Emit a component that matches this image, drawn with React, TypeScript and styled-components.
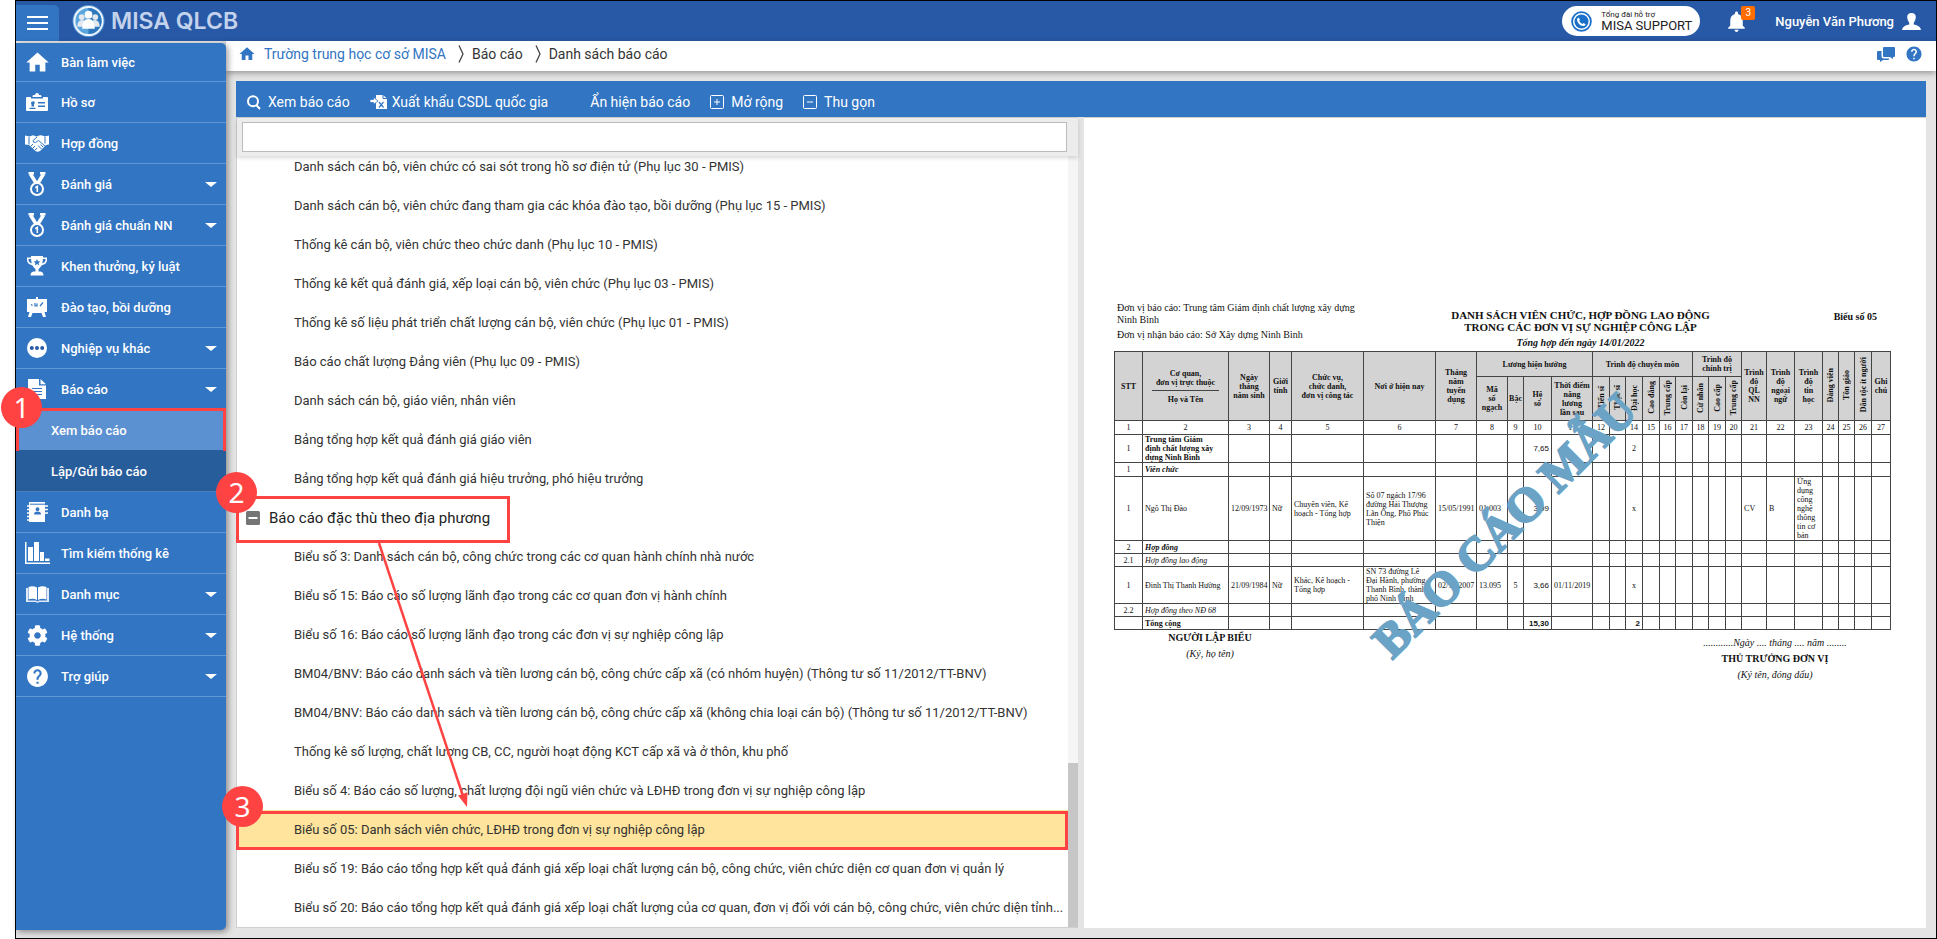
import React from "react";
import styled, { createGlobalStyle, css } from "styled-components";
import { FaCog } from "react-icons/fa";
import { MdHome, MdHelp, MdNotifications } from "react-icons/md";

const colors = {
  header: "#2859a6",
  brand: "#3175c3",
  line: "#5f96d3",
  subActive: "#5c91d1",
  sub: "#285d9c",
  page: "#e4e4e4",
  border: "#cfcfcf",
  mark: "#ff4343",
  highlight: "#fee49c",
  watermark: "#6ba3c6",
  text: "#333",
};

const GlobalStyle = createGlobalStyle`
  *, *::before, *::after { box-sizing: border-box; }
  body {
    margin: 0;
    background: #fff;
    color: ${colors.text};
    font-family: Roboto, "Noto Sans", sans-serif;
    font-size: 13px;
  }
  button, input { font: inherit; }
  a { color: inherit; text-decoration: none; }
  ul, p, h1, h2 { margin: 0; padding: 0; }
  ul { list-style: none; }
  svg { display: block; flex: none; }
`;

/* ---------- shell ---------- */

const Frame = styled.div`
  margin-left: 15px;
  height: 100vh;
  min-height: 600px;
  border: 1px solid #000;
  display: flex;
  flex-direction: column;
  background: ${colors.page};
`;

const Header = styled.header`
  flex: none;
  display: flex;
  align-items: center;
  height: 40px;
  padding-right: 15px;
  background: ${colors.header};
  color: #fff;
`;

const Hamburger = styled.button`
  align-self: flex-end;
  width: 43px;
  height: 36px;
  padding: 0 11px;
  border: 0;
  border-radius: 0 5px 0 0;
  background: ${colors.brand};
  display: flex;
  flex-direction: column;
  justify-content: center;
  gap: 4px;

  span {
    height: 2px;
    background: #fff;
  }
`;

const Logo = styled.a`
  display: flex;
  align-items: center;
  gap: 6px;
  margin-left: 13px;
  font-family: Inter, sans-serif;
  font-size: 23px;
  font-weight: 600;
  color: #c3d3ec;
`;

const HeaderTools = styled.div`
  margin-left: auto;
  display: flex;
  align-items: center;
`;

const Support = styled.button`
  display: flex;
  align-items: center;
  gap: 9px;
  width: 138px;
  height: 30px;
  padding: 0 9px;
  border: 0;
  border-radius: 15px;
  background: #fff;
  color: #222;
  text-align: left;
`;

const SupportText = styled.span`
  display: flex;
  flex-direction: column;
  font-size: 13px;
  line-height: 14px;
  white-space: nowrap;

  small {
    font-size: 8px;
    line-height: 9px;
  }
`;

const Bell = styled.button`
  position: relative;
  margin-left: 24px;
  padding: 0;
  border: 0;
  background: none;
  color: #fff;
`;

const Badge = styled.span`
  position: absolute;
  top: -3px;
  right: -6px;
  width: 14px;
  height: 14px;
  border-radius: 2px;
  background: #ff6d00;
  font-size: 10px;
  line-height: 14px;
`;

const User = styled.button`
  display: flex;
  align-items: center;
  gap: 8px;
  margin-left: 26px;
  padding: 0;
  border: 0;
  background: none;
  color: #fff;
  font-size: 13px;
  font-weight: 500;
`;

const Body = styled.div`
  flex: 1;
  min-height: 0;
  display: flex;
`;

/* ---------- sidebar ---------- */

const Sidebar = styled.nav`
  position: relative;
  z-index: 2;
  flex: none;
  width: 210px;
  margin: 2px 0 8px;
  border-radius: 0 5px 5px 0;
  background: ${colors.brand};
  box-shadow: 2px 2px 6px rgba(0, 0, 0, 0.4);
  color: #fff;
  font-weight: 500;
`;

const SideRow = styled.a`
  display: flex;
  align-items: center;
  height: 41px;
  padding: 0 9px;
  border-bottom: 1px solid ${colors.line};

  &:first-child {
    height: 39px;
  }
`;

const SideIcon = styled.span`
  width: 24px;
  margin-right: 12px;
  display: flex;
  justify-content: center;
`;

const Caret = styled.i`
  margin-left: auto;
  border: 6px solid transparent;
  border-top: 5px solid #fff;
  border-bottom: 0;
`;

const SubRow = styled.a<{ $active?: boolean }>`
  position: relative;
  display: flex;
  align-items: center;
  height: 41px;
  padding-left: 35px;
  border-bottom: 1px solid ${(p) => (p.$active ? colors.sub : "#4d80ba")};
  background: ${(p) => (p.$active ? colors.subActive : colors.sub)};
`;

/* ---------- content ---------- */

const Content = styled.div`
  flex: 1;
  min-width: 0;
  display: flex;
  flex-direction: column;
`;

const Breadcrumb = styled.div`
  flex: none;
  display: flex;
  align-items: center;
  height: 30px;
  margin-bottom: 10px;
  padding: 0 13px 4px 12px;
  background: #fff;
  box-shadow: 0 2px 6px rgba(0, 0, 0, 0.35);
  font-size: 14px;
`;

const CrumbHome = styled.a`
  display: flex;
  align-items: center;
  gap: 8px;
  color: ${colors.brand};
`;

const CrumbSep = styled.svg`
  margin: 0 8px 0 12px;
`;

const CrumbTools = styled.div`
  margin-left: auto;
  display: flex;
  align-items: center;
  gap: 10px;
  color: ${colors.brand};
`;

const Toolbar = styled.div`
  flex: none;
  display: flex;
  align-items: center;
  gap: 20px;
  height: 36px;
  margin: 0 10px;
  padding: 6px 11px 0;
  background: ${colors.brand};
`;

const ToolButton = styled.button<{ $gap?: number; $indent?: number }>`
  display: flex;
  align-items: center;
  gap: ${(p) => p.$gap ?? 7}px;
  padding: 0 0 0 ${(p) => p.$indent ?? 0}px;
  border: 0;
  background: none;
  color: #fff;
  font-size: 14px;
  white-space: nowrap;
`;

const Panes = styled.div`
  flex: 1;
  min-height: 0;
  display: grid;
  grid-template-columns: minmax(0, 1fr) minmax(0, 1fr);
  grid-template-rows: minmax(0, 1fr);
  gap: 6px;
  margin: 0 10px 10px;
`;

const TreePane = styled.section`
  position: relative;
  display: flex;
  flex-direction: column;
  border: solid ${colors.border};
  border-width: 1px 0 1px 1px;
  background: #fff;
`;

const SearchBar = styled.div`
  position: relative;
  z-index: 1;
  flex: none;
  padding: 4px 11px 4px 5px;
  background: #ececec;
  box-shadow: 0 2px 4px rgba(0, 0, 0, 0.15);

  input {
    display: block;
    width: 100%;
    height: 30px;
    padding: 0 8px;
    border: 1px solid #bbb;
    background: #fff;
  }
`;

const TreeScroll = styled.div`
  flex: 1;
  min-height: 0;
  display: flex;
`;

/* The list is scrolled to its end, so rows are stacked against the bottom. */
const TreeList = styled.ul`
  flex: 1;
  min-width: 0;
  display: flex;
  flex-direction: column;
  justify-content: flex-end;
  overflow: hidden;
`;

const rowBase = css`
  display: flex;
  align-items: center;
  width: 100%;
  height: 39px;
  border: 0;
  background: none;
  text-align: left;
  white-space: nowrap;
`;

const TreeRow = styled.button<{ $selected?: boolean }>`
  ${rowBase}
  padding: 0 4px 0 57px;
  color: ${colors.text};
  ${(p) => p.$selected && `background: ${colors.highlight};`}

  span {
    overflow: hidden;
    text-overflow: ellipsis;
  }
`;

const TreeGroup = styled.button`
  ${rowBase}
  gap: 9px;
  padding: 0 9px;
  color: #222;
  font-size: 15px;
`;

const ScrollTrack = styled.div`
  flex: none;
  width: 10px;
  display: flex;
  flex-direction: column;
  justify-content: flex-end;
  background: #f5f5f5;

  i {
    height: 164px;
    background: #c6c6c6;
  }
`;

/* ---------- step markers drawn over the page ---------- */

const StepBox = styled.div`
  position: absolute;
  border: 3px solid ${colors.mark};
  pointer-events: none;
`;

const Step = styled.b`
  position: absolute;
  z-index: 3;
  width: 41px;
  height: 41px;
  border-radius: 50%;
  background: ${colors.mark};
  color: #fff;
  font-family: "Noto Sans", sans-serif;
  font-size: 28px;
  font-weight: 400;
  line-height: 40px;
  text-align: center;
`;

const MenuBox = styled(StepBox)`
  inset: -2px 0 -4px;
`;
const MenuStep = styled(Step)`
  left: -15px;
  top: -23px;
`;

const Markers = styled.div`
  position: absolute;
  inset: auto 0 0 -1px;
  z-index: 3;
  height: 455px;
  pointer-events: none;
`;
const GroupBox = styled(StepBox)`
  left: 0;
  top: 24px;
  width: 274px;
  height: 47px;
`;
const GroupStep = styled(Step)`
  left: -20px;
  top: 0;
`;
const ItemBox = styled(StepBox)`
  left: 0;
  right: 10px;
  bottom: 77px;
  height: 39px;
`;
const ItemStep = styled(Step)`
  left: -14px;
  bottom: 100px;
`;
const Arrow = styled.svg`
  position: absolute;
  left: 140px;
  top: 71px;
`;

/* ---------- report preview ---------- */

const Preview = styled.section`
  padding: 184px 35px 0 30px;
  border-top: 1px solid ${colors.border};
  background: #fff;
  overflow: hidden;
  color: #111;
  font-family: "Liberation Serif", serif;
`;

const Sheet = styled.article`
  position: relative;
  width: 777px;
  margin: 0 auto;
`;

const SheetHead = styled.header`
  display: flex;
  height: 49px;
`;

const Org = styled.div`
  width: 252px;
  padding-left: 3px;
  font-size: 10px;
  line-height: 12px;

  p + p { margin-top: 3px; }
`;

const SheetTitle = styled.div`
  width: 429px;
  padding-top: 7px;
  text-align: center;

  h1 { font-size: 11px; line-height: 12px; }
  p {
    margin-top: 4px;
    font-size: 10px;
    line-height: 12px;
    font-style: italic;
    font-weight: 700;
  }
`;

const FormNo = styled.div`
  flex: 1;
  padding: 9px 14px 0 0;
  font-size: 10px;
  line-height: 12px;
  font-weight: 700;
  text-align: right;
`;

const Grid = styled.table`
  width: 777px;
  table-layout: fixed;
  border-collapse: collapse;
  font-size: 8px;
  line-height: 9px;

  th, td {
    padding: 0 2px;
    border: 1px solid #444;
    vertical-align: middle;
  }
  th {
    padding: 0;
    background: #d3d3d3;
    font-weight: 700;
  }
`;

const Tr = styled.tr<{ $h: number }>`
  height: ${(p) => p.$h}px;
`;

const Td = styled.td<{ $align?: string; $bold?: boolean; $italic?: boolean; $sans?: boolean }>`
  text-align: ${(p) => p.$align ?? "left"};
  font-weight: ${(p) => (p.$bold ? 700 : 400)};
  font-style: ${(p) => (p.$italic ? "italic" : "normal")};
  white-space: pre-line;
  ${(p) => p.$sans && `font-family: "Liberation Sans", sans-serif;`}
`;

const Vertical = styled.span`
  display: inline-block;
  writing-mode: vertical-rl;
  transform: rotate(180deg);
  white-space: nowrap;
`;

const NameRule = styled.span`
  display: block;
  margin: 3px 9px 4px;
  border-top: 1px solid #444;
`;

const Signatures = styled.div`
  display: flex;
  justify-content: space-between;
  font-size: 10px;
  text-align: center;
`;

const Sign = styled.div<{ $side: "left" | "right" }>`
  width: ${(p) => (p.$side === "left" ? 192 : 232)}px;
  padding-top: ${(p) => (p.$side === "left" ? 0 : 5)}px;
  line-height: 16px;
  p { font-style: italic; }
`;

const Watermark = styled.div`
  position: absolute;
  left: 284px;
  top: 316px;
  transform: rotate(-45deg);
  transform-origin: 0 100%;
  color: ${colors.watermark};
  -webkit-text-stroke: 2px ${colors.watermark};
  font-size: 48px;
  line-height: 48px;
  font-weight: 700;
  white-space: nowrap;
`;

/* ---------- icons ---------- */

const IdIcon = () => (
  <svg width="22" height="18" viewBox="0 0 22 18" fill="#fff">
    <path fillRule="evenodd" d="M9 2q0-2 2-2t2 2h1.500q1 0 1 1.500V4h-9v-.500Q6.500 2 7.500 2zM1 4h4v1.500h12V4h4q1 0 1 1v12q0 1-1 1H1q-1 0-1-1V5q0-1 1-1zM6.500 8.500a1.500 1.500 0 0 0-1 2.600v2.400H8v-2.400a1.500 1.500 0 0 0-1.500-2.600zM3.500 16h6v-1.300h-6zM12 9h7v1.500h-7zM12 12.500h7V14h-7z" />
  </svg>
);
const HandshakeIcon = () => (
  <svg width="24" height="17" viewBox="0 0 24 17">
    <path
      d="M0 .5L4.500 1.500 8 0.300 11.500 1.500 15 .2Q17 0 19.500 1.500L24 .5V9.500L21 10 15 16Q12.500 17.500 10.500 16L4 10 0 9.500z"
      fill="#fff"
    />
    <path
      d="M4 2v7.500M20 2v6.500M12 2L8 5.500Q8 8 10.500 7.500L13.500 5.500 20 11M5.500 11.500L8 9M7.500 13.500L10 11M10 15.200L12 13M13 10.500L16.500 14M15.500 9.500L18 12"
      fill="none"
      stroke={colors.brand}
      strokeWidth="1"
    />
  </svg>
);
const MedalIcon = () => (
  <svg width="18" height="24" viewBox="0 0 18 24" fill="none" stroke="#fff">
    <path d="M2.500 2L8 11M15.500 2L10 11" strokeWidth="3.500" />
    <path d="M.5 1.200h5.500M12 1.200h5.500" strokeWidth="2.400" />
    <circle cx="9" cy="17" r="6" strokeWidth="2" fill={colors.brand} />
    <path d="M7.300 15.700L9.300 14.500V20" strokeWidth="1.600" />
  </svg>
);
const TrophyIcon = () => (
  <svg width="20" height="20" viewBox="0 0 20 20" fill="#fff">
    <path
      fillRule="evenodd"
      d="M4 0h12v1.500h4v2.500q0 4-5.500 5.500Q13 12 11.500 13v2.500h2q3 .5 3 4h-13q0-3.500 3-4h2V13Q7 12 5.500 9.500 0 8 0 4V1.500h4zM1.500 3v1.200Q1.800 6.500 4.700 7.500 4.200 5.500 4.100 3zM18.500 3h-2.600q-.1 2.500-.6 4.500 2.900-1 3.200-3.300z"
    />
    <path d="M10 3l1 2.200 2.400.2-1.800 1.600.5 2.400L10 8.100 7.900 9.400l.5-2.400-1.800-1.600L9 5.200z" fill={colors.brand} />
  </svg>
);
const BoardIcon = () => (
  <svg width="20" height="20" viewBox="0 0 20 20" fill="#fff">
    <path d="M9 0h2v2h9v13h-2.500l1.500 5h-3l-1.500-4H12v0H8v0H5.500L4 20H1l1.500-5H0V2h9z" />
    <path d="M4 7.500l1.500 1M8 6v3h2V6.500M13 9l3-3.500" stroke={colors.brand} strokeWidth="1.200" fill="none" />
  </svg>
);
const MoreIcon = () => (
  <svg width="20" height="20" viewBox="0 0 20 20">
    <circle cx="10" cy="10" r="10" fill="#fff" />
    <g fill={colors.header}>
      <circle cx="4.800" cy="10" r="2" />
      <circle cx="10" cy="10" r="2" />
      <circle cx="15.200" cy="10" r="2" />
    </g>
  </svg>
);
const FileIcon = () => (
  <svg width="18" height="20" viewBox="0 0 18 20" fill="#fff">
    <path d="M0 0h11v6.500h7V20H0zM12.500 0L18 5.200h-5.500z" />
    <path d="M4 9.500h10M4 12.500h10M4 15.500h10" stroke={colors.brand} strokeWidth="1.200" />
  </svg>
);
const ContactsIcon = () => (
  <svg width="21" height="20" viewBox="0 0 21 20" fill="#fff">
    <path d="M2 0h16v20H2z" />
    <path d="M0 4h4M0 7.500h4M0 11h4M0 14.500h4M0 18h4M18 4h3M18 7.500h3M18 11h3" stroke="#fff" strokeWidth="1.600" />
    <path d="M3 2.200h15" stroke={colors.brand} strokeWidth="1" />
    <circle cx="10.500" cy="7.200" r="1.900" fill={colors.brand} />
    <path d="M7 12.500q0-3 3.500-3t3.500 3z" fill={colors.brand} />
  </svg>
);
const ChartIcon = () => (
  <svg width="25" height="22" viewBox="0 0 25 22" fill="#fff">
    <path d="M0 0h1.500v20.500H25V22H0zM3 5h5v14H3zM9 0h5v19H9zM15 10h4v9h-4zM20 16.500h4.500V19H20z" />
  </svg>
);
const BookIcon = () => (
  <svg width="23" height="17" viewBox="0 0 23 17">
    <path d="M0 2h2v12.500h8l1.500 1 1.500-1h8V2h2v14H13.500q-2 1.500-4 0H0z" fill="#fff" opacity=".85" />
    <path d="M2.500 1Q7-.8 11 1.500V14Q7 12 2.500 13.500zM20.500 1Q16-.8 12 1.500V14q4-2 8.500-.5z" fill="#fff" />
  </svg>
);
const LogoIcon = () => (
  <svg width="33" height="34" viewBox="0 0 34 34">
    <circle cx="17" cy="17" r="16.500" fill="#5b9bd8" />
    <circle cx="17" cy="17" r="14.500" fill="#5ba6de" stroke="#eef5fc" strokeWidth="2" />
    <path d="M17 3.500a13.500 13.500 0 0 1 0 27z" fill="#2f78bd" />
    <g fill="#e3e8ee">
      <circle cx="10" cy="13" r="3" />
      <circle cx="24" cy="13" r="3" />
      <path d="M5.500 23q0-7 5-7t4 7zM28.500 23q0-7-5-7t-4 7z" />
    </g>
    <g fill="#fff">
      <circle cx="17" cy="10.500" r="4" />
      <path d="M10.500 25q0-10 6.500-10t6.500 10z" />
    </g>
  </svg>
);
const PhoneIcon = () => (
  <svg width="21" height="21" viewBox="0 0 21 21">
    <circle cx="10.500" cy="10.500" r="9.400" fill="#fff" stroke="#1a6fc9" strokeWidth="1.800" />
    <circle cx="10.500" cy="10.500" r="7" fill="#1a6fc9" />
    <path d="M7.500 6.500l1.500 2-.8 1.200q1 2.300 3.200 3.200l1.300-.9 2 1.500q-.8 1.700-2.500 1.600Q7 14.200 6 9q0-1.800 1.500-2.500z" fill="#fff" />
  </svg>
);
const PersonIcon = () => (
  <svg width="19" height="17" viewBox="0 0 19 17" fill="#fff">
    <path d="M9.500 0q4.500 0 4.300 4.500-.2 3.300-2 5.200v1.800q6.700 1 7.200 5.500H0q.5-4.500 7.200-5.500V9.700q-1.800-1.900-2-5.200Q5 0 9.500 0z" />
  </svg>
);
const SearchIcon = () => (
  <svg width="14" height="15" viewBox="0 0 14 15" fill="none" stroke="#fff" strokeWidth="2">
    <circle cx="6" cy="6.300" r="5" />
    <path d="M9.500 10.300l3.500 3.700" />
  </svg>
);
const ExportIcon = () => (
  <svg width="17" height="14" viewBox="0 0 17 14">
    <path d="M6 0h7l4 3.500V14H6z" fill="#fff" />
    <path d="M13 0v3.500h4" stroke={colors.brand} fill="none" />
    <path d="M0 4.500h3.500V2L8 6 3.500 9.500V7.500H0z" fill="#fff" stroke={colors.brand} strokeWidth=".8" />
    <path d="M9 7l4.500 5.500M13.500 7L9 12.500" stroke={colors.brand} strokeWidth="1.200" />
  </svg>
);
const SquareIcon = ({ plus }: { plus?: boolean }) => (
  <svg width="14" height="14" viewBox="0 0 14 14" fill="none" stroke="#fff">
    <rect x=".5" y=".5" width="13" height="13" rx="1" />
    <path d={plus ? "M4 7h6M7 4v6" : "M4 7h6"} />
  </svg>
);
const CollapseIcon = () => (
  <svg width="14" height="14" viewBox="0 0 14 14">
    <rect width="14" height="14" rx="1.500" fill="#757575" />
    <path d="M2.500 7h9" stroke="#fff" strokeWidth="2" />
  </svg>
);
const ChatIcon = () => (
  <svg width="18" height="15" viewBox="0 0 18 15" fill={colors.brand}>
    <path d="M7 0h10q1 0 1 1v8q0 1-1 1h-1v2l-3-2H7q-1 0-1-1V1q0-1 1-1z" />
    <path d="M4.500 4v5q0 2.500 2.500 2.500h5v.5q0 1-1 1H6L3 15v-2H1q-1 0-1-1V5q0-1 1-1z" />
  </svg>
);
const Chevron = () => (
  <CrumbSep width="6" height="18" viewBox="0 0 6 18" fill="none" stroke="#444" strokeWidth="1.300">
    <path d="M1 .5l4 8.500-4 8.500" />
  </CrumbSep>
);

/* ---------- data ---------- */

type MenuItem = { label: string; icon: React.ReactNode; caret?: boolean; children?: string[] };

const menu: MenuItem[] = [
  { label: "Bàn làm việc", icon: <MdHome size={27} /> },
  { label: "Hồ sơ", icon: <IdIcon /> },
  { label: "Hợp đồng", icon: <HandshakeIcon /> },
  { label: "Đánh giá", icon: <MedalIcon />, caret: true },
  { label: "Đánh giá chuẩn NN", icon: <MedalIcon />, caret: true },
  { label: "Khen thưởng, kỷ luật", icon: <TrophyIcon /> },
  { label: "Đào tạo, bồi dưỡng", icon: <BoardIcon /> },
  { label: "Nghiệp vụ khác", icon: <MoreIcon />, caret: true },
  { label: "Báo cáo", icon: <FileIcon />, caret: true, children: ["Xem báo cáo", "Lập/Gửi báo cáo"] },
  { label: "Danh bạ", icon: <ContactsIcon /> },
  { label: "Tìm kiếm thống kê", icon: <ChartIcon /> },
  { label: "Danh mục", icon: <BookIcon />, caret: true },
  { label: "Hệ thống", icon: <FaCog size={21} />, caret: true },
  { label: "Trợ giúp", icon: <MdHelp size={25} />, caret: true },
];

const reportsTop = [
  "Danh sách cán bộ, viên chức có sai sót trong hồ sơ điện tử (Phụ lục 30 - PMIS)",
  "Danh sách cán bộ, viên chức đang tham gia các khóa đào tạo, bồi dưỡng (Phụ lục 15 - PMIS)",
  "Thống kê cán bộ, viên chức theo chức danh (Phụ lục 10 - PMIS)",
  "Thống kê kết quả đánh giá, xếp loại cán bộ, viên chức (Phụ lục 03 - PMIS)",
  "Thống kê số liệu phát triển chất lượng cán bộ, viên chức (Phụ lục 01 - PMIS)",
  "Báo cáo chất lượng Đảng viên (Phụ lục 09 - PMIS)",
  "Danh sách cán bộ, giáo viên, nhân viên",
  "Bảng tổng hợp kết quả đánh giá giáo viên",
  "Bảng tổng hợp kết quả đánh giá hiệu trưởng, phó hiệu trưởng",
];

const reportsLocal = [
  "Biểu số 3: Danh sách cán bộ, công chức trong các cơ quan hành chính nhà nước",
  "Biểu số 15: Báo cáo số lượng lãnh đạo trong các cơ quan đơn vị hành chính",
  "Biểu số 16: Báo cáo số lượng lãnh đạo trong các đơn vị sự nghiệp công lập",
  "BM04/BNV: Báo cáo danh sách và tiền lương cán bộ, công chức cấp xã (có nhóm huyện) (Thông tư số 11/2012/TT-BNV)",
  "BM04/BNV: Báo cáo danh sách và tiền lương cán bộ, công chức cấp xã (không chia loại cán bộ) (Thông tư số 11/2012/TT-BNV)",
  "Thống kê số lượng, chất lượng CB, CC, người hoạt động KCT cấp xã và ở thôn, khu phố",
  "Biểu số 4: Báo cáo số lượng, chất lượng đội ngũ viên chức và LĐHĐ trong đơn vị sự nghiệp công lập",
  "Biểu số 05: Danh sách viên chức, LĐHĐ trong đơn vị sự nghiệp công lập",
  "Biểu số 19: Báo cáo tổng hợp kết quả đánh giá xếp loại chất lượng cán bộ, công chức, viên chức diện cơ quan đơn vị quản lý",
  "Biểu số 20: Báo cáo tổng hợp kết quả đánh giá xếp loại chất lượng của cơ quan, đơn vị đối với cán bộ, công chức, viên chức diện tỉnh...",
];
const selectedReport = 7;

const columnWidths = [
  28, 86, 41, 22, 72, 72, 41, 31, 16, 28, 41, 17, 16, 17, 17, 16, 17, 16, 17, 16, 25, 28, 28, 16, 16, 17, 19,
];

const verticalGroups = ["Tiến sĩ", "Thạc sĩ", "Đại học", "Cao đẳng", "Trung cấp", "Còn lại", "Cử nhân", "Cao cấp", "Trung cấp"];

type Cell = { text: React.ReactNode; align?: string; bold?: boolean; italic?: boolean; sans?: boolean };
type Row = { height: number; cells: Record<number, Cell> };

/* Cells are keyed by the column number printed in the table. */
const rows: Row[] = [
  {
    height: 28,
    cells: {
      1: { text: "1", align: "center" },
      2: { text: "Trung tâm Giám\nđịnh chất lượng xây\ndựng Ninh Bình", bold: true },
      10: { text: "7,65", align: "right", sans: true },
      14: { text: "2", align: "center" },
    },
  },
  { height: 14, cells: { 1: { text: "1", align: "center" }, 2: { text: "Viên chức", bold: true, italic: true } } },
  {
    height: 62,
    cells: {
      1: { text: "1", align: "center" },
      2: { text: "Ngô Thị Đào" },
      3: { text: "12/09/1973" },
      4: { text: "Nữ" },
      5: { text: "Chuyên viên, Kế\nhoạch - Tổng hợp" },
      6: { text: "Số 07 ngách 17/96\nđường Hải Thượng\nLãn Ông, Phố Phúc\nThiện" },
      7: { text: "15/05/1991" },
      8: { text: "01.003" },
      10: { text: "3,99", align: "right", sans: true },
      14: { text: "x", align: "center" },
      21: { text: "CV" },
      22: { text: "B" },
      23: { text: "Ứng\ndụng\ncông\nnghệ\nthông\ntin cơ\nbản" },
    },
  },
  { height: 13, cells: { 1: { text: "2", align: "center" }, 2: { text: "Hợp đồng", bold: true, italic: true } } },
  { height: 13, cells: { 1: { text: "2.1", align: "center" }, 2: { text: "Hợp đồng lao động", italic: true } } },
  {
    height: 36,
    cells: {
      1: { text: "1", align: "center" },
      2: { text: "Đinh Thị Thanh Hường" },
      3: { text: "21/09/1984" },
      4: { text: "Nữ" },
      5: { text: "Khác, Kế hoạch -\nTổng hợp" },
      6: { text: "SN 73 đường Lê\nĐại Hành, phường\nThanh Bình, thành\nphố Ninh Bình" },
      7: { text: "02/11/2007" },
      8: { text: "13.095" },
      9: { text: "5", align: "center" },
      10: { text: "3,66", align: "right", sans: true },
      11: { text: "01/11/2019" },
      14: { text: "x", align: "center" },
    },
  },
  { height: 13, cells: { 1: { text: "2.2", align: "center" }, 2: { text: "Hợp đồng theo NĐ 68", italic: true } } },
  {
    height: 13,
    cells: {
      2: { text: "Tổng cộng", bold: true },
      10: { text: "15,30", align: "right", bold: true, sans: true },
      14: { text: "2", align: "right", bold: true, sans: true },
    },
  },
];

/* ---------- views ---------- */

function SideMenu() {
  return (
    <Sidebar>
      {menu.map((item) => (
        <React.Fragment key={item.label}>
          <SideRow href="#">
            <SideIcon>{item.icon}</SideIcon>
            {item.label}
            {item.caret && <Caret />}
          </SideRow>
          {item.children?.map((child, i) => (
            <SubRow key={child} href="#" $active={i === 0}>
              {child}
              {i === 0 && (
                <>
                  <MenuBox />
                  <MenuStep>1</MenuStep>
                </>
              )}
            </SubRow>
          ))}
        </React.Fragment>
      ))}
    </Sidebar>
  );
}

function ReportTree() {
  return (
    <TreePane>
      <SearchBar>
        <input type="text" aria-label="Tìm báo cáo" />
      </SearchBar>
      <TreeScroll>
        <TreeList>
          {reportsTop.map((name) => (
            <li key={name}>
              <TreeRow><span>{name}</span></TreeRow>
            </li>
          ))}
          <li>
            <TreeGroup aria-expanded="true">
              <CollapseIcon />
              Báo cáo đặc thù theo địa phương
            </TreeGroup>
          </li>
          {reportsLocal.map((name, i) => (
            <li key={name}>
              <TreeRow $selected={i === selectedReport}><span>{name}</span></TreeRow>
            </li>
          ))}
        </TreeList>
        <ScrollTrack><i /></ScrollTrack>
      </TreeScroll>
      <Markers>
        <GroupBox />
        <ItemBox />
        <Arrow width="100" height="270" viewBox="0 0 100 270">
          <path d="M3 0L87 253" stroke={colors.mark} strokeWidth="2.500" />
          <path d="M91 264L82 252.500L91.500 249.500Z" fill={colors.mark} />
        </Arrow>
        <GroupStep>2</GroupStep>
        <ItemStep>3</ItemStep>
      </Markers>
    </TreePane>
  );
}

function ReportTable() {
  return (
    <Grid>
      <colgroup>
        {columnWidths.map((w, i) => (
          <col key={i} width={w} />
        ))}
      </colgroup>
      <thead>
        <Tr $h={25}>
          <th rowSpan={2}>STT</th>
          <th rowSpan={2}>
            Cơ quan,<br />đơn vị trực thuộc
            <NameRule />
            Họ và Tên
          </th>
          <th rowSpan={2}>Ngày<br />tháng<br />năm sinh</th>
          <th rowSpan={2}>Giới<br />tính</th>
          <th rowSpan={2}>Chức vụ,<br />chức danh,<br />đơn vị công tác</th>
          <th rowSpan={2}>Nơi ở hiện nay</th>
          <th rowSpan={2}>Tháng<br />năm<br />tuyển<br />dụng</th>
          <th colSpan={4}>Lương hiện hưởng</th>
          <th colSpan={6}>Trình độ chuyên môn</th>
          <th colSpan={3}>Trình độ<br />chính trị</th>
          <th rowSpan={2}>Trình<br />độ<br />QL<br />NN</th>
          <th rowSpan={2}>Trình<br />độ<br />ngoại<br />ngữ</th>
          <th rowSpan={2}>Trình<br />độ<br />tin<br />học</th>
          <th rowSpan={2}><Vertical>Đảng viên</Vertical></th>
          <th rowSpan={2}><Vertical>Tôn giáo</Vertical></th>
          <th rowSpan={2}><Vertical>Dân tộc ít người</Vertical></th>
          <th rowSpan={2}>Ghi<br />chú</th>
        </Tr>
        <Tr $h={44}>
          <th>Mã<br />số<br />ngạch</th>
          <th>Bậc</th>
          <th>Hệ<br />số</th>
          <th>Thời điểm<br />nâng<br />lương<br />lần sau</th>
          {verticalGroups.map((label, i) => (
            <th key={i}><Vertical>{label}</Vertical></th>
          ))}
        </Tr>
      </thead>
      <tbody>
        <Tr $h={14}>
          {columnWidths.map((_, i) => (
            <Td key={i} $align="center">{i + 1}</Td>
          ))}
        </Tr>
        {rows.map((row, r) => (
          <Tr key={r} $h={row.height}>
            {columnWidths.map((_, i) => {
              const cell = row.cells[i + 1];
              return (
                <Td key={i} $align={cell?.align} $bold={cell?.bold} $italic={cell?.italic} $sans={cell?.sans}>
                  {cell?.text}
                </Td>
              );
            })}
          </Tr>
        ))}
      </tbody>
    </Grid>
  );
}

function ReportPreview() {
  return (
    <Preview>
      <Sheet>
        <SheetHead>
          <Org>
            <p>Đơn vị báo cáo: Trung tâm Giám định chất lượng xây dựng Ninh Bình</p>
            <p>Đơn vị nhận báo cáo: Sở Xây dựng Ninh Bình</p>
          </Org>
          <SheetTitle>
            <h1>DANH SÁCH VIÊN CHỨC, HỢP ĐỒNG LAO ĐỘNG<br />TRONG CÁC ĐƠN VỊ SỰ NGHIỆP CÔNG LẬP</h1>
            <p>Tổng hợp đến ngày 14/01/2022</p>
          </SheetTitle>
          <FormNo>Biểu số 05</FormNo>
        </SheetHead>
        <ReportTable />
        <Signatures>
          <Sign $side="left">
            <b>NGƯỜI LẬP BIỂU</b>
            <p>(Ký, họ tên)</p>
          </Sign>
          <Sign $side="right">
            <p>............Ngày .... tháng .... năm ........</p>
            <b>THỦ TRƯỞNG ĐƠN VỊ</b>
            <p>(Ký tên, đóng dấu)</p>
          </Sign>
        </Signatures>
        <Watermark>BÁO CÁO MẪU</Watermark>
      </Sheet>
    </Preview>
  );
}

export default function App() {
  return (
    <>
      <GlobalStyle />
      <Frame>
        <Header>
          <Hamburger aria-label="Menu"><span /><span /><span /></Hamburger>
          <Logo href="#">
            <LogoIcon />
            MISA QLCB
          </Logo>
          <HeaderTools>
            <Support>
              <PhoneIcon />
              <SupportText>
                <small>Tổng đài hỗ trợ</small>
                MISA SUPPORT
              </SupportText>
            </Support>
            <Bell>
              <MdNotifications size={25} />
              <Badge>3</Badge>
            </Bell>
            <User>
              Nguyễn Văn Phương
              <PersonIcon />
            </User>
          </HeaderTools>
        </Header>
        <Body>
          <SideMenu />
          <Content>
            <Breadcrumb>
              <CrumbHome href="#">
                <MdHome size={18} />
                Trường trung học cơ sở MISA
              </CrumbHome>
              <Chevron />
              <a href="#">Báo cáo</a>
              <Chevron />
              <span>Danh sách báo cáo</span>
              <CrumbTools>
                <ChatIcon />
                <MdHelp size={18} />
              </CrumbTools>
            </Breadcrumb>
            <Toolbar>
              <ToolButton><SearchIcon />Xem báo cáo</ToolButton>
              <ToolButton $gap={5}><ExportIcon />Xuất khẩu CSDL quốc gia</ToolButton>
              <ToolButton $indent={22}>Ẩn hiện báo cáo</ToolButton>
              <ToolButton><SquareIcon plus />Mở rộng</ToolButton>
              <ToolButton><SquareIcon />Thu gọn</ToolButton>
            </Toolbar>
            <Panes>
              <ReportTree />
              <ReportPreview />
            </Panes>
          </Content>
        </Body>
      </Frame>
    </>
  );
}
